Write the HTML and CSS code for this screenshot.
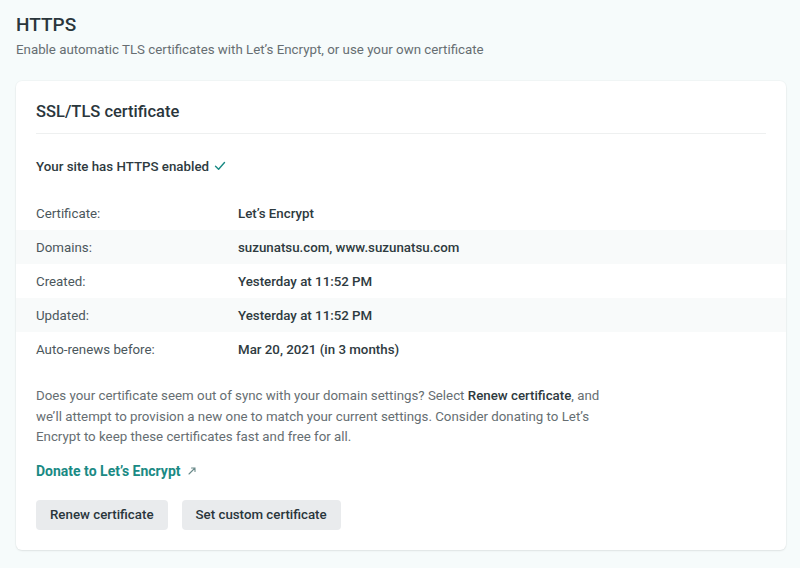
FILE: index.html
```html
<!DOCTYPE html>
<html>
<head>
<meta charset="utf-8">
<link rel="stylesheet" href="styles.css">
</head>
<body>
<h1 class="page-title">HTTPS</h1>
<p class="page-sub">Enable automatic TLS certificates with Let’s Encrypt, or use your own certificate</p>
<section class="card">
  <h2 class="card-title">SSL/TLS certificate</h2>
  <p class="status">Your site has HTTPS enabled <svg class="check" width="12" height="10" viewBox="0 0 12 10"><path d="M1.5 5.2 L4.6 8.3 L10.5 1.5" fill="none" stroke="#1a8a84" stroke-width="1.4" stroke-linecap="round" stroke-linejoin="round"/></svg></p>
  <dl class="details">
    <div class="row"><dt>Certificate:</dt><dd>Let’s Encrypt</dd></div>
    <div class="row striped"><dt>Domains:</dt><dd>suzunatsu.com, www.suzunatsu.com</dd></div>
    <div class="row"><dt>Created:</dt><dd>Yesterday at 11:52 PM</dd></div>
    <div class="row striped"><dt>Updated:</dt><dd>Yesterday at 11:52 PM</dd></div>
    <div class="row"><dt>Auto-renews before:</dt><dd>Mar 20, 2021 (in 3 months)</dd></div>
  </dl>
  <p class="note">Does your certificate seem out of sync with your domain settings? Select <strong>Renew certificate</strong>, and we’ll attempt to provision a new one to match your current settings. Consider donating to Let’s Encrypt to keep these certificates fast and free for all.</p>
  <a class="donate" href="#">Donate to Let’s Encrypt <svg class="ext" width="10" height="10" viewBox="0 0 10 10"><path d="M2 8 L8 2 M4.5 2 H8 V5.5" fill="none" stroke="#6a8a8a" stroke-width="1.1" stroke-linecap="round"/></svg></a>
  <div class="actions">
    <button class="btn">Renew certificate</button>
    <button class="btn">Set custom certificate</button>
  </div>
</section>
</body>
</html>
```
FILE: styles.css
```css
* { box-sizing: border-box; }
body {
  margin: 0;
  padding: 12px 16px 16px;
  background: #f6fbfb;
  font-family: Roboto, "Noto Sans", sans-serif;
  color: #2e3a40;
  font-size: 13.3px;
}
.page-title {
  margin: 0;
  font-size: 19px;
  line-height: 26px;
  font-weight: 500;
  color: #2a363c;
}
.page-sub {
  margin: 2px 0 0;
  font-size: 13.3px;
  line-height: 20px;
  color: #666e72;
}
.card {
  margin-top: 21px;
  width: 770px;
  background: #fff;
  border-radius: 6px;
  box-shadow: 0 1px 2px rgba(0,0,0,0.08), 0 0 0 1px rgba(0,0,0,0.02);
  padding: 19px 20px 20px;
  overflow: hidden;
}
.card-title {
  margin: 0;
  font-size: 16.5px;
  line-height: 24px;
  font-weight: 500;
  color: #2a363c;
  padding-bottom: 9px;
  border-bottom: 1px solid #eef0f0;
}
.status {
  margin: 23px 0 0;
  font-weight: 500;
  line-height: 20px;
}
.check { margin-left: 2px; vertical-align: 0; }
.details {
  margin: 19px -20px 0;
}
.row {
  display: flex;
  height: 34px;
  align-items: center;
  padding: 0 20px;
}
.row.striped { background: #f8fafa; }
.row dt {
  width: 202px;
  color: #4b575c;
}
.row dd {
  margin: 0;
  font-weight: 500;
}
.note {
  margin: 20px 0 0;
  width: 580px;
  line-height: 20.5px;
  color: #666e72;
}
.note strong { color: #2e3a40; font-weight: 500; }
.donate {
  display: inline-block;
  margin-top: 13px;
  line-height: 20px;
  font-size: 14px;
  color: #1a8a84;
  font-weight: 700;
  text-decoration: none;
}
.ext { margin-left: 3px; }
.actions {
  display: flex;
  gap: 14px;
  margin-top: 19px;
}
.btn {
  font-family: inherit;
  font-size: 13.3px;
  font-weight: 500;
  color: #2a363c;
  background: #e9ebed;
  border: none;
  border-radius: 4px;
  height: 30px;
  padding: 0 14px;
}
```
